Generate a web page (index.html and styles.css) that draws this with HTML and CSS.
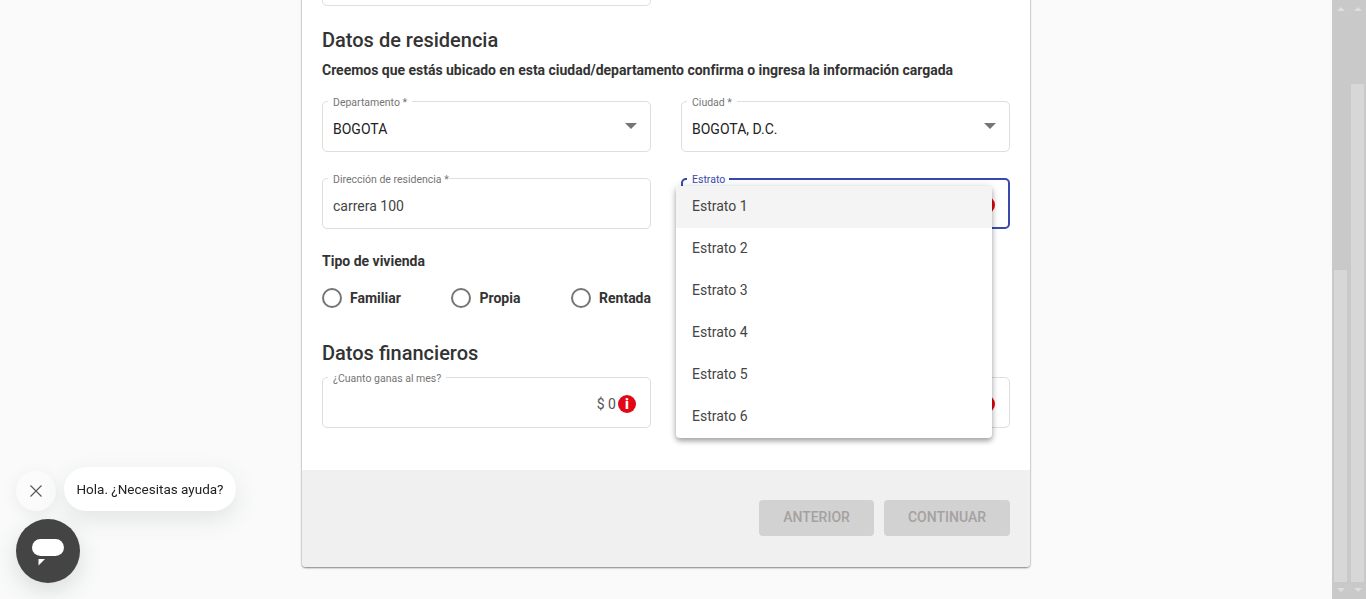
FILE: index.html
```html
<!DOCTYPE html>
<html lang="en">
<head>
  <meta charset="UTF-8">
  <title>Datos de residencia</title>
  <link rel="stylesheet" href="styles.css">
</head>
<body>
  <main class="page">
    <div class="card">
      <div class="card-body">
        <div class="row row-cut">
          <div class="field"></div>
        </div>

        <h2 class="section-title">Datos de residencia</h2>
        <p class="hint">Creemos que estás ubicado en esta ciudad/departamento confirma o ingresa la información cargada</p>

        <div class="row">
          <div class="field">
            <span class="field-label">Departamento *</span>
            <span class="field-value">BOGOTA</span>
            <span class="caret"></span>
          </div>
          <div class="field">
            <span class="field-label">Ciudad *</span>
            <span class="field-value">BOGOTA, D.C.</span>
            <span class="caret"></span>
          </div>
        </div>

        <div class="row row-next">
          <div class="field">
            <span class="field-label field-label-tight">Dirección de residencia *</span>
            <span class="field-value field-value-soft">carrera 100</span>
          </div>
          <div class="field field-focus">
            <span class="field-label">Estrato</span>
            <span class="info">i</span>
            <ul class="menu">
              <li class="menu-item menu-item-active">Estrato 1</li>
              <li class="menu-item">Estrato 2</li>
              <li class="menu-item">Estrato 3</li>
              <li class="menu-item">Estrato 4</li>
              <li class="menu-item">Estrato 5</li>
              <li class="menu-item">Estrato 6</li>
            </ul>
          </div>
        </div>

        <h3 class="group-title">Tipo de vivienda</h3>
        <div class="radios">
          <label class="radio"><span class="radio-dot"></span>Familiar</label>
          <label class="radio"><span class="radio-dot"></span>Propia</label>
          <label class="radio"><span class="radio-dot"></span>Rentada</label>
        </div>

        <h2 class="section-title section-title-next">Datos financieros</h2>
        <div class="row">
          <div class="field field-money">
            <span class="field-label">¿Cuanto ganas al mes?</span>
            <span class="money">$ 0</span>
            <span class="info">i</span>
          </div>
          <div class="field field-money">
            <span class="info">i</span>
          </div>
        </div>
      </div>

      <div class="card-footer">
        <button class="btn btn-prev" disabled>ANTERIOR</button>
        <button class="btn btn-next" disabled>CONTINUAR</button>
      </div>
    </div>
  </main>

  <div class="scrollbar">
    <span class="arrow arrow-up"></span>
    <span class="thumb thumb-short"></span>
    <span class="arrow arrow-down"></span>
  </div>
  <div class="scrollbar">
    <span class="arrow arrow-up"></span>
    <span class="thumb thumb-long"></span>
    <span class="arrow arrow-down"></span>
  </div>

  <div class="chat">
    <div class="chat-top">
      <button class="chat-close" aria-label="Cerrar">
        <svg width="14" height="14" viewBox="0 0 14 14"><path d="M1.5 1.5l11 11M12.5 1.5l-11 11" stroke="#555" stroke-width="1.1" fill="none"/></svg>
      </button>
      <div class="chat-bubble">Hola. ¿Necesitas ayuda?</div>
    </div>
    <button class="chat-open" aria-label="Abrir chat">
      <svg width="32" height="27" viewBox="0 0 32 27"><rect x="0" y="0" width="32" height="17" rx="8.5" fill="#fff"/><path d="M6.500 20h6.500l-6.500 6.500z" fill="#fff"/></svg>
    </button>
  </div>
</body>
</html>
```

FILE: styles.css
```css
* {
  box-sizing: border-box;
}

body {
  margin: 0;
  height: 100vh;
  overflow: hidden;
  display: flex;
  background: #fafafa;
  font-family: Roboto, sans-serif;
  color: #333;
}

.page {
  flex: 1;
  min-width: 0;
  height: 100%;
  display: flex;
  justify-content: center;
  align-items: flex-start;
}

.card {
  width: 728px;
  margin-top: -65px;
  background: white;
  border-radius: 0 0 4px 4px;
  box-shadow: 0 1px 2px rgba(0, 0, 0, 0.45), 0 0 2px rgba(0, 0, 0, 0.2);
}

.card-body {
  padding: 20px 20px 42px;
}

.row {
  display: grid;
  grid-template-columns: 329px 329px;
  column-gap: 30px;
}

.row-cut {
  margin-bottom: 22px;
}

.row-next {
  margin-top: 26px;
}

.section-title {
  margin: 0;
  font-size: 20px;
  line-height: 24px;
  font-weight: 500;
}

.section-title-next {
  margin-top: 33px;
  margin-bottom: 12px;
}

.hint {
  margin: 8px 0 21px;
  font-size: 14px;
  line-height: 20px;
  font-weight: 700;
  letter-spacing: -0.02px;
}

.field {
  position: relative;
  height: 51px;
  padding: 0 10px;
  display: flex;
  align-items: center;
  border: 1px solid #dedede;
  border-radius: 5px;
  font-size: 14px;
}

.field-label {
  position: absolute;
  top: -5px;
  left: 5px;
  padding: 0 5px;
  background: white;
  font-size: 10.5px;
  line-height: 12px;
  color: #757575;
}

.field-label-tight {
  padding-right: 0;
}

.field-value {
  padding-top: 4px;
  color: #222;
}

.field-value-soft {
  color: #444;
}

.caret {
  position: absolute;
  top: 21px;
  right: 13px;
  border-left: 6px solid transparent;
  border-right: 6px solid transparent;
  border-top: 6px solid #757575;
}

.field-focus {
  border: 2px solid #3949ab;
}

.field-focus .field-label {
  top: -6px;
  left: 4px;
  padding: 0 4px 0 5px;
  color: #3949ab;
}

.info {
  position: absolute;
  top: 17px;
  right: 14px;
  width: 18px;
  height: 18px;
  border-radius: 50%;
  background: #e30613;
  color: white;
  font-size: 14px;
  font-weight: 900;
  line-height: 18px;
  text-align: center;
}

.field-focus .info {
  top: 16px;
  right: 13px;
}

.field-money {
  justify-content: flex-end;
  padding-right: 34px;
}

.money {
  padding-top: 3px;
  color: #555;
}

.menu {
  position: absolute;
  top: 6px;
  left: -7px;
  width: 316px;
  margin: 0;
  padding: 0;
  list-style: none;
  background: white;
  border-radius: 4px;
  box-shadow: 0 3px 5px rgba(0, 0, 0, 0.3), 0 1px 10px rgba(0, 0, 0, 0.14);
  overflow: hidden;
  z-index: 2;
}

.menu-item {
  height: 42px;
  padding: 0 16px 2px;
  display: flex;
  align-items: center;
  font-size: 14px;
  color: #444;
}

.menu-item-active {
  background: #f4f4f4;
}

.group-title {
  margin: 22px 0 17px;
  font-size: 14px;
  line-height: 20px;
  font-weight: 700;
}

.radios {
  width: 329px;
  display: flex;
  justify-content: space-between;
}

.radio {
  display: flex;
  align-items: center;
  gap: 8px;
  font-size: 14px;
  line-height: 20px;
  font-weight: 700;
}

.radio-dot {
  width: 20px;
  height: 20px;
  border: 2px solid #757575;
  border-radius: 50%;
}

.card-footer {
  height: 97px;
  padding: 30px 20px 0;
  display: flex;
  justify-content: flex-end;
  gap: 10px;
  background: #f0f0f0;
  border-radius: 0 0 4px 4px;
}

.btn {
  height: 36px;
  padding: 0 0 2px;
  border: none;
  border-radius: 4px;
  background: #d2d2d2;
  color: #a5a1a1;
  font-family: Roboto, sans-serif;
  font-size: 14px;
  font-weight: 500;
}

.btn-prev {
  width: 115px;
}

.btn-next {
  width: 126px;
}

.scrollbar {
  flex: none;
  width: 17px;
  height: 100%;
  display: flex;
  flex-direction: column;
  align-items: center;
  background: #c9c9c9;
}

.arrow {
  flex: none;
  width: 0;
  height: 0;
  border-left: 4px solid transparent;
  border-right: 4px solid transparent;
}

.arrow-up {
  margin-top: 7px;
  border-bottom: 4px solid #dedede;
}

.arrow-down {
  margin-top: 6px;
  margin-bottom: 7px;
  border-top: 4px solid #dedede;
}

.thumb {
  width: 13px;
  margin-top: auto;
  background: #d7d7d7;
}

.thumb-short {
  height: 312px;
}

.thumb-long {
  height: 498px;
}

.chat {
  position: fixed;
  left: 16px;
  bottom: 16px;
  display: flex;
  flex-direction: column;
  align-items: flex-start;
  gap: 8px;
}

.chat-top {
  display: flex;
  align-items: flex-end;
  gap: 8px;
}

.chat-close {
  width: 40px;
  height: 40px;
  padding: 0;
  display: flex;
  align-items: center;
  justify-content: center;
  border: none;
  border-radius: 50%;
  background: #fbfbfb;
  box-shadow: 0 4px 16px rgba(40, 70, 70, 0.08);
}

.chat-bubble {
  width: 172px;
  height: 44px;
  padding: 0 12px;
  display: flex;
  align-items: center;
  justify-content: center;
  border-radius: 22px;
  background: white;
  font-size: 13.5px;
  color: #222;
  box-shadow: 0 8px 24px rgba(40, 70, 70, 0.12);
}

.chat-open {
  width: 64px;
  height: 64px;
  padding: 3px 0 0;
  display: flex;
  align-items: center;
  justify-content: center;
  border: none;
  border-radius: 50%;
  background: #444;
  box-shadow: 0 8px 24px rgba(40, 70, 70, 0.16);
}
```
